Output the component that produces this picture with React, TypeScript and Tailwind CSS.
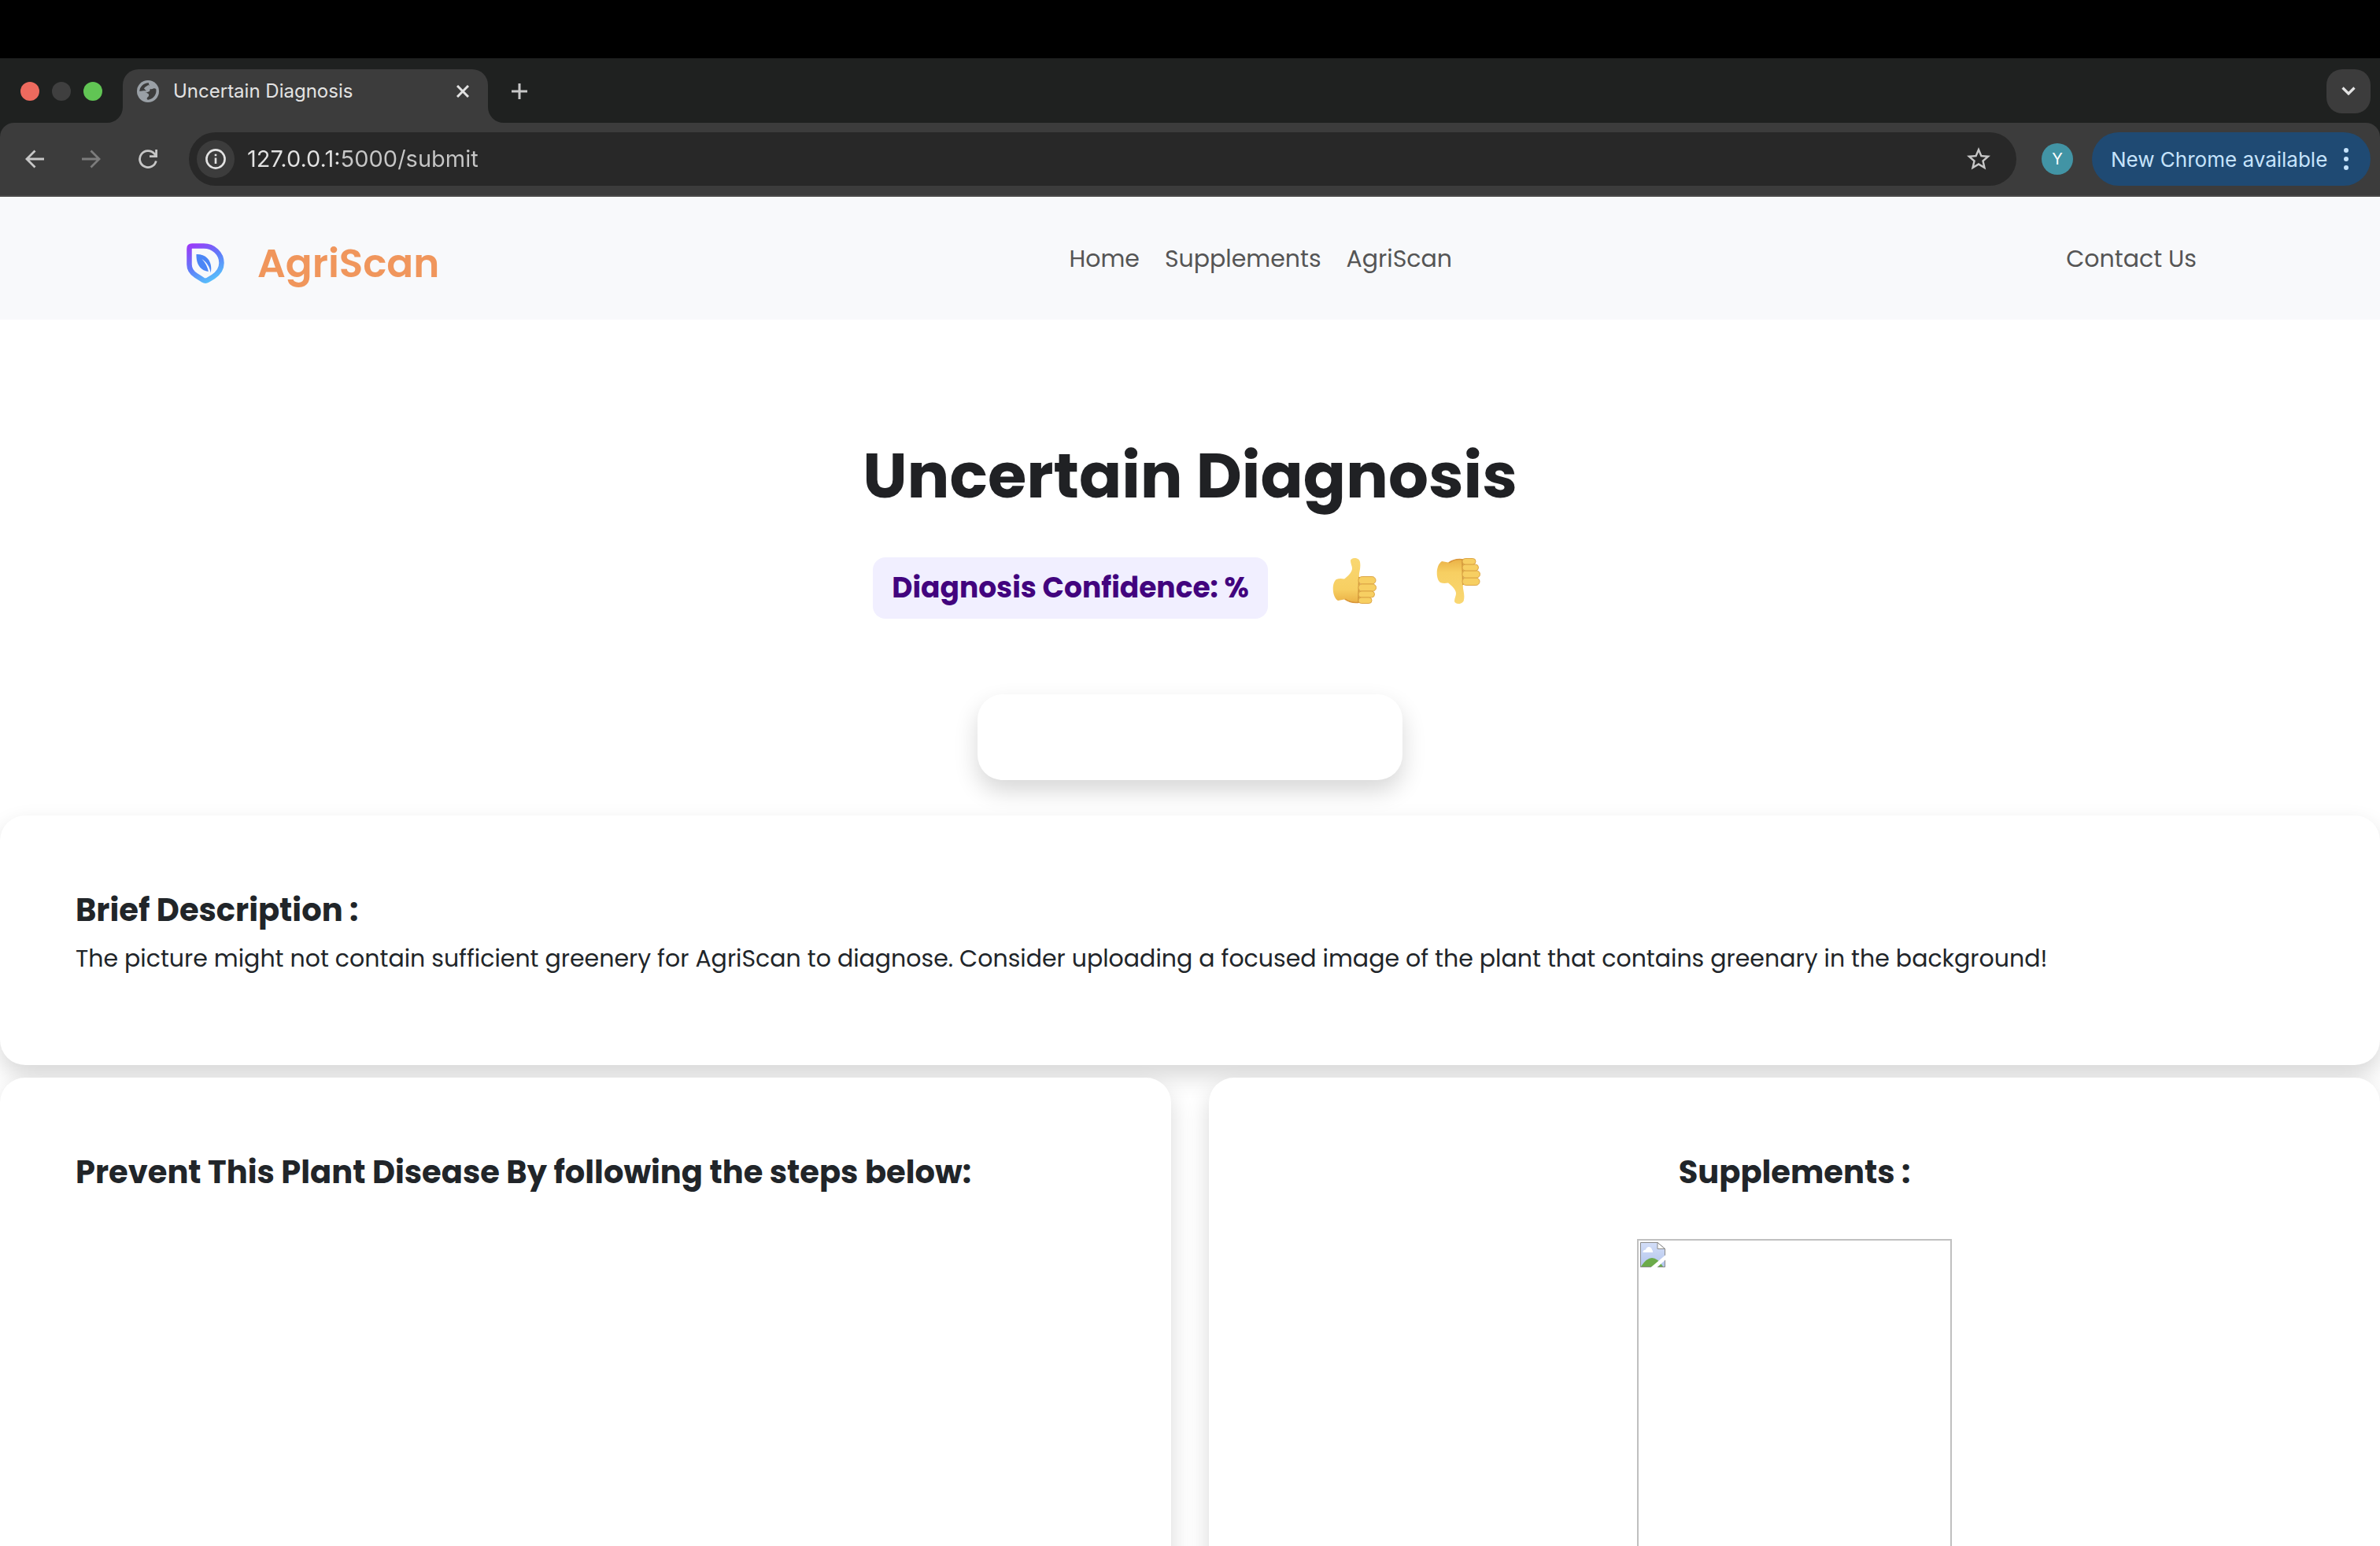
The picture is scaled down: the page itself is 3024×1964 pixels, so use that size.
import React from "react";

const cardShadow = "shadow-[0_14px_30px_rgba(0,0,0,0.16)]";

function GlobeIcon() {
  return (
    <svg viewBox="0 0 28 28" className="size-7 shrink-0" aria-hidden="true">
      <circle cx="14" cy="14" r="14" fill="#9aa0a6" />
      <path
        fill="#3c3c3c"
        d="M15 3.200C14.800 5 16 6 15.500 8C15 10 16.500 11.500 18.500 11.200C20.500 11 21.500 9.500 24.300 11C25.500 17.500 21.500 23.500 14.500 24.700C12.500 24.700 12 23 13.500 21.500C15.500 20.500 15.800 18 14 16.800C12 15.500 10 14.200 3.300 14.500C3 8.500 8.500 3 15 3.200Z"
      />
      <path fill="#9aa0a6" d="M3 14C7 13.500 9.500 12.800 12 13.500L9 10.500C10 8 12.500 7.500 14.500 6L17.500 8L16 14L12 15.500H3Z" />
    </svg>
  );
}

function LogoIcon() {
  return (
    <svg viewBox="0 0 48 51" className="h-[51px] w-12 shrink-0" aria-hidden="true">
      <defs>
        <linearGradient id="logo" x1="6" y1="2" x2="32" y2="50" gradientUnits="userSpaceOnUse">
          <stop offset="0" stopColor="#9a3cf8" />
          <stop offset="0.5" stopColor="#5f7cf9" />
          <stop offset="1" stopColor="#57c4fb" />
        </linearGradient>
      </defs>
      <path
        d="M7 3.500H22C34 3.500 44.500 13 44.500 25C44.500 33 40 38.500 34 42.500L27 46.700Q24 48.500 21 46.700L12 41C6.500 37.500 3.500 33 3.500 27V7Q3.500 3.500 7 3.500Z"
        fill="none"
        stroke="url(#logo)"
        strokeWidth="6.500"
      />
      <path
        d="M12.500 14C20 13.500 25.500 16.500 28.500 21.500C31.500 27 31.800 32 30.700 37.500C29.500 30 26 24.500 19.500 20C24 25 27 30.500 27.800 36C18 35 12 26.500 12.500 14Z"
        fill="#4b86f6"
      />
    </svg>
  );
}

function ThumbIcon({ down = false }: { down?: boolean }) {
  const id = down ? "skin-down" : "skin-up";
  return (
    <svg viewBox="0 0 56 60" className="h-[60px] w-14" aria-hidden="true">
      <defs>
        <linearGradient id={id} x1="0" y1="0" x2="0" y2="1">
          <stop offset="0" stopColor="#f9d772" />
          <stop offset="0.7" stopColor="#f7cf62" />
          <stop offset="1" stopColor="#eab146" />
        </linearGradient>
      </defs>
      <g transform={down ? "matrix(1 0 0 -1 0 60)" : undefined}>
        <path
          fill={`url(#${id})`}
          d="M5 28Q9 26.500 15 27.500C19 24.500 25 19 25 14C25 11 23 8 23 4.500C23 0 34 -.8 35 6C36.500 14 33 20 34 25L36 57C29 59 20 57 15 53.500L7 55C-1 50 -1 32 5 28Z"
        />
        <path d="M16 53Q24 59 35 57" fill="none" stroke="#d9953a" strokeWidth="1.500" />
        <path d="M34 25L33 57" stroke="#d39a3c" strokeWidth="2" />
        <g fill="#f7cf62" stroke="#dda545" strokeWidth="1">
          <rect x="33" y="24.500" width="22" height="9.500" rx="4.750" />
          <rect x="33" y="34" width="22.500" height="9" rx="4.500" />
          <rect x="33" y="43" width="20.500" height="8" rx="4" />
          <rect x="33" y="51" width="17" height="7.500" rx="3.750" />
        </g>
      </g>
    </svg>
  );
}

function BrokenImageIcon() {
  return (
    <svg viewBox="0 0 32 32" className="size-8" aria-hidden="true">
      <defs>
        <linearGradient id="sky" x1="0" y1="0" x2="0" y2="1">
          <stop offset="0" stopColor="#d3def8" />
          <stop offset="1" stopColor="#b3c5ec" />
        </linearGradient>
      </defs>
      <path d="M.5.5H22L31.500 8.500V31.500H.5Z" fill="url(#sky)" stroke="#8b8b8b" />
      <path d="M3.500 13Q3 10 7 9.500Q8 6 11 6T15 9.500Q16.500 11 16 13Z" fill="#fff" />
      <path d="M1 31Q8 20 15 20T29 31Z" fill="#6cab4a" />
      <path d="M22 .5V8.500H31.500Z" fill="#fff" stroke="#8b8b8b" />
      <path d="M32.500 16V22L21 32.500H13Z" fill="#fff" />
    </svg>
  );
}

function TabStrip() {
  return (
    <div className="flex h-[82px] shrink-0 items-start bg-[#1f2120] pr-3 pl-[26px] pt-3.5">
      <div className="flex h-14 w-[130px] shrink-0 items-center gap-4">
        <button aria-label="Close window" className="size-6 rounded-full bg-[#ed6a5e]" />
        <button aria-label="Minimise window" className="size-6 rounded-full bg-[#3f3f3f]" />
        <button aria-label="Zoom window" className="size-6 rounded-full bg-[#61c554]" />
      </div>
      <div className="relative flex h-[68px] w-[464px] shrink-0 items-start rounded-t-[20px] bg-[#3c3c3c] px-[18px]">
        <svg viewBox="0 0 20 20" className="absolute bottom-0 -left-5 size-5" aria-hidden="true">
          <path d="M20 0V20H0A20 20 0 0 0 20 0Z" fill="#3c3c3c" />
        </svg>
        <svg viewBox="0 0 20 20" className="absolute -right-5 bottom-0 size-5" aria-hidden="true">
          <path d="M0 0V20H20A20 20 0 0 1 0 0Z" fill="#3c3c3c" />
        </svg>
        <div className="flex h-14 w-full items-center">
          <GlobeIcon />
          <span className="ml-[18px] flex-1 font-[Inter,sans-serif] text-2xl text-[#e3e3e3]">Uncertain Diagnosis</span>
          <button aria-label="Close tab" className="flex size-7 items-center justify-center">
            <svg viewBox="0 0 16 16" className="size-4" aria-hidden="true">
              <path d="M1 1L15 15M15 1L1 15" stroke="#e3e3e3" strokeWidth="3" />
            </svg>
          </button>
        </div>
      </div>
      <button aria-label="New tab" className="ml-3 flex size-14 items-center justify-center">
        <svg viewBox="0 0 20 20" className="size-5" aria-hidden="true">
          <path d="M10 0V20M0 10H20" stroke="#c7c7c7" strokeWidth="3" />
        </svg>
      </button>
      <button
        aria-label="Search tabs"
        className="ml-auto flex size-14 items-center justify-center rounded-[20px] bg-[#3c3c3c]"
      >
        <svg viewBox="0 0 18 12" className="h-3 w-[18px]" aria-hidden="true">
          <path d="M1.500 1.500L9 9L16.500 1.500" fill="none" stroke="#e3e3e3" strokeWidth="3.200" />
        </svg>
      </button>
    </div>
  );
}

function Toolbar() {
  return (
    <div className="shrink-0 bg-[#1f2120]">
      <div className="flex h-[94px] items-center rounded-t-[18px] border-b-2 border-[#4a4a4a] bg-[#3c3c3c] pr-3 pl-4">
        <div className="flex w-56 shrink-0 gap-4">
          <button aria-label="Back" className="flex size-14 items-center justify-center">
            <svg viewBox="0 0 24 24" className="size-6" fill="none" stroke="#c7c7c7" strokeWidth="2.800" aria-hidden="true">
              <path d="M24 12H2M12.500 1.500L2 12L12.500 22.500" />
            </svg>
          </button>
          <button aria-label="Forward" className="flex size-14 items-center justify-center">
            <svg viewBox="0 0 24 24" className="size-6" fill="none" stroke="#7c7c7c" strokeWidth="2.800" aria-hidden="true">
              <path d="M0 12H22M11.500 1.500L22 12L11.500 22.500" />
            </svg>
          </button>
          <button aria-label="Reload" className="flex size-14 items-center justify-center">
            <svg viewBox="0 0 24 24" className="size-6" fill="none" stroke="#c7c7c7" strokeWidth="2.800" aria-hidden="true">
              <path d="M22.300 14.500A10.500 10.500 0 1 1 20 5.200L22.500 8M22.600 0V8.600H14" />
            </svg>
          </button>
        </div>
        <div className="flex h-[68px] flex-1 items-center rounded-full bg-[#282828] pr-[30px] pl-2.5">
          <button
            aria-label="View site information"
            className="flex size-12 items-center justify-center rounded-full bg-[#3c3c3c]"
          >
            <svg viewBox="0 0 26 26" className="size-[26px]" fill="none" stroke="#e3e3e3" aria-hidden="true">
              <circle cx="13" cy="13" r="11.600" strokeWidth="2.600" />
              <path d="M13 11.500V19M13 6.700V9.200" strokeWidth="2.600" />
            </svg>
          </button>
          <input
            aria-label="Address"
            defaultValue="127.0.0.1:5000/submit"
            className="ml-4 flex-1 bg-[linear-gradient(to_right,#e3e3e3_118px,#c7c7c7_118px)] bg-clip-text font-[Inter,sans-serif] text-[29px] text-transparent outline-none"
          />
          <button aria-label="Bookmark this tab">
            <svg viewBox="0 0 24 24" className="size-9" aria-hidden="true">
              <path
                fill="#c7c7c7"
                d="m22 9.240-7.190-.62L12 2 9.190 8.630 2 9.240l5.460 4.730L5.820 21 12 17.270 18.180 21l-1.630-7.030L22 9.240zM12 15.400l-3.760 2.270 1-4.280-3.320-2.880 4.380-.38L12 6.100l1.710 4.040 4.380.38-3.320 2.880 1 4.280L12 15.400z"
              />
            </svg>
          </button>
        </div>
        <button
          aria-label="Profile"
          className="ml-8 flex size-10 items-center justify-center rounded-full bg-[#4294a5] font-[Inter,sans-serif] text-xl text-white"
        >
          Y
        </button>
        <button className="ml-6 flex h-[68px] w-[354px] items-center justify-between rounded-full bg-[#1f4a73] pr-7 pl-6 font-[Inter,sans-serif] text-[26px] text-[#c6e3fb]">
          New Chrome available
          <svg viewBox="0 0 6 28" className="h-7 w-1.5" fill="#c6e3fb" aria-hidden="true">
            <circle cx="3" cy="3" r="3" />
            <circle cx="3" cy="14" r="3" />
            <circle cx="3" cy="25" r="3" />
          </svg>
        </button>
      </div>
    </div>
  );
}

function SiteHeader() {
  return (
    <header className="flex h-[156px] shrink-0 items-center justify-between bg-[#f8f9fb] px-[233px]">
      <a href="#home" className="flex items-center gap-[42px] pt-3 pl-1 text-[50px] font-semibold text-[#f0965c]">
        <LogoIcon />
        AgriScan
      </a>
      <nav className="flex gap-8 pl-5 text-[30px] text-[#555555]">
        <a href="#home">Home</a>
        <a href="#supplements">Supplements</a>
        <a href="#agriscan">AgriScan</a>
      </nav>
      <a href="#contact" className="text-[30px] text-[#555555]">
        Contact Us
      </a>
    </header>
  );
}

export default function App() {
  return (
    <div className="flex h-screen flex-col overflow-hidden bg-black pt-[74px]">
      <TabStrip />
      <Toolbar />
      <div className="flex min-h-0 flex-1 flex-col overflow-hidden bg-white font-[Poppins,Inter,sans-serif] text-[#212529]">
        <SiteHeader />
        <main>
          <div className="flex flex-col items-center pt-[150px] pb-[45px]">
            <h1 className="text-[80px] leading-[96px] font-bold text-[#202124]">Uncertain Diagnosis</h1>
            <div className="mt-14 flex items-start">
              <p className="rounded-2xl bg-[#f1efff] px-6 py-4 text-[36px] leading-[46px] font-bold text-[#42047e]">
                Diagnosis Confidence: %
              </p>
              <button aria-label="Good diagnosis" className="ml-[82px]">
                <ThumbIcon />
              </button>
              <button aria-label="Bad diagnosis" className="mr-[34px] ml-[76px]">
                <ThumbIcon down />
              </button>
            </div>
            <div className={`mt-24 h-[109px] w-[540px] rounded-[32px] bg-white ${cardShadow}`} />
          </div>
          <section className={`h-[317px] rounded-[32px] bg-white px-24 pt-24 ${cardShadow}`}>
            <h2 className="text-[40px] leading-12 font-bold">Brief Description :</h2>
            <p className="mt-3.5 text-[30px] leading-12">
              The picture might not contain sufficient greenery for AgriScan to diagnose. Consider uploading a focused
              image of the plant that contains greenary in the background!
            </p>
          </section>
          <div className="mt-4 grid grid-cols-2 gap-12">
            <section className={`rounded-[32px] bg-white px-24 pt-24 pb-24 ${cardShadow}`}>
              <h2 className="text-[40px] leading-12 font-bold">Prevent This Plant Disease By following the steps below:</h2>
            </section>
            <section className={`flex flex-col items-center rounded-[32px] bg-white px-24 pt-24 pb-24 ${cardShadow}`}>
              <h2 className="text-[40px] leading-12 font-bold">Supplements :</h2>
              <div className="mt-[61px] h-[600px] w-[400px] border-2 border-[#c0c0c0] p-0.5">
                <BrokenImageIcon />
              </div>
            </section>
          </div>
        </main>
      </div>
    </div>
  );
}
